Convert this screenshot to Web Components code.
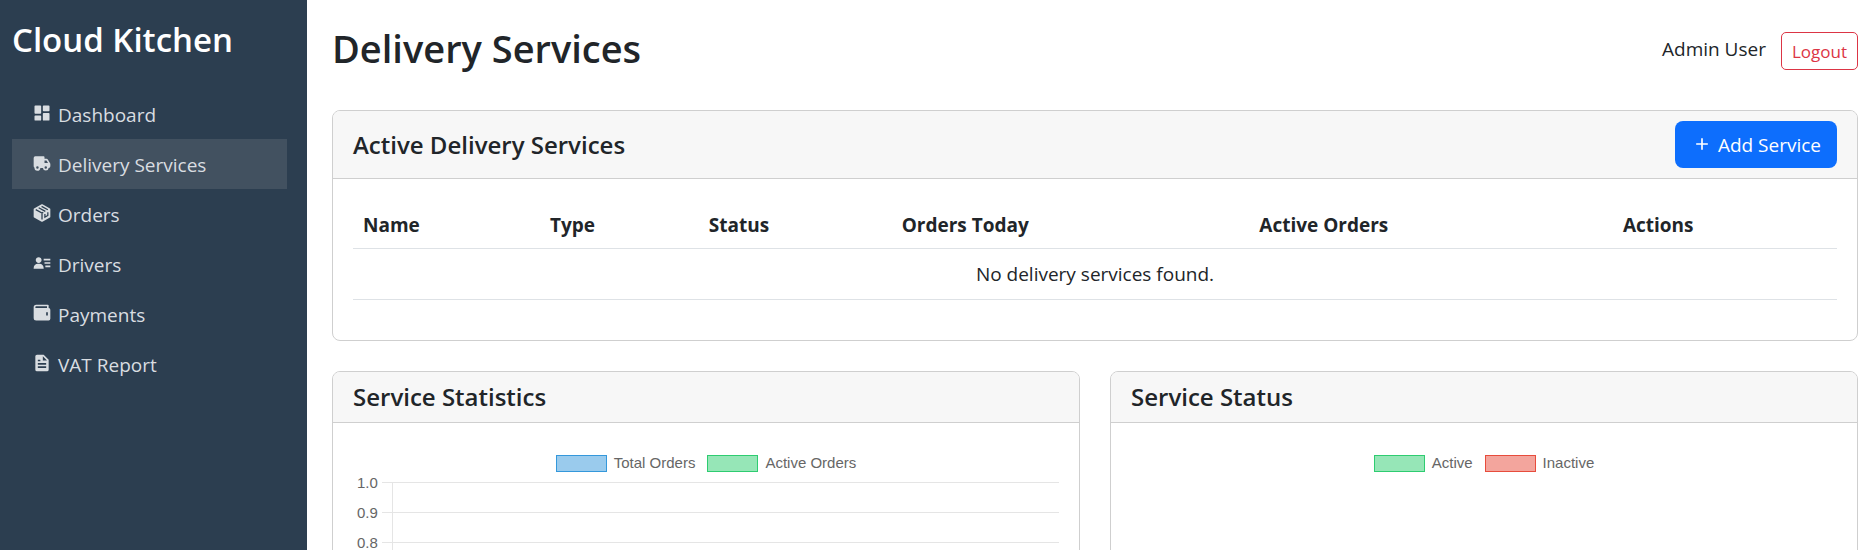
<!DOCTYPE html>
<html lang="en">
<head>
<meta charset="utf-8">
<title>Delivery Services - Cloud Kitchen</title>
<style>
  body { margin: 0; font: 19px/30px "Segoe UI", "Open Sans", "Noto Sans", sans-serif; color: #212529; background: #fff; }
</style>
</head>
<body>
<kitchen-app>
  <side-bar slot="side" heading="Cloud Kitchen">
    <nav-item icon="dashboard">Dashboard</nav-item>
    <nav-item icon="truck" active>Delivery Services</nav-item>
    <nav-item icon="package">Orders</nav-item>
    <nav-item icon="user">Drivers</nav-item>
    <nav-item icon="wallet">Payments</nav-item>
    <nav-item icon="file">VAT Report</nav-item>
  </side-bar>
  <page-header user="Admin User">Delivery Services</page-header>
  <panel-card heading="Active Delivery Services">
    <add-button slot="action">Add Service</add-button>
    <service-table></service-table>
  </panel-card>
  <card-row>
    <panel-card heading="Service Statistics" tall>
      <chart-legend>
        <legend-key tone="blue">Total Orders</legend-key>
        <legend-key tone="green">Active Orders</legend-key>
      </chart-legend>
      <chart-grid ticks="1.0 0.9 0.8"></chart-grid>
    </panel-card>
    <panel-card heading="Service Status" tall>
      <chart-legend>
        <legend-key tone="green">Active</legend-key>
        <legend-key tone="red">Inactive</legend-key>
      </chart-legend>
    </panel-card>
  </card-row>
</kitchen-app>

<script>
const ICONS = {
  dashboard: '<path d="M4 13h6a1 1 0 0 0 1-1V4a1 1 0 0 0-1-1H4a1 1 0 0 0-1 1v8a1 1 0 0 0 1 1zm-1 7a1 1 0 0 0 1 1h6a1 1 0 0 0 1-1v-4a1 1 0 0 0-1-1H4a1 1 0 0 0-1 1v4zm10 0a1 1 0 0 0 1 1h6a1 1 0 0 0 1-1v-7a1 1 0 0 0-1-1h-6a1 1 0 0 0-1 1v7zm1-10h6a1 1 0 0 0 1-1V4a1 1 0 0 0-1-1h-6a1 1 0 0 0-1 1v5a1 1 0 0 0 1 1z"/>',
  truck: '<path fill-rule="evenodd" d="M19.15 8a2 2 0 0 0-1.72-1H15V5a1 1 0 0 0-1-1H4a2 2 0 0 0-2 2v10a2 2 0 0 0 1 1.73 3.49 3.49 0 0 0 7 .27h3.1a3.48 3.48 0 0 0 6.9 0 2 2 0 0 0 2-2v-3a1.07 1.07 0 0 0-.14-.52zM15 9h2.43l1.8 3H15zM6.5 19A1.5 1.5 0 1 1 8 17.5 1.5 1.5 0 0 1 6.5 19zm10 0a1.5 1.5 0 1 1 1.5-1.5 1.5 1.5 0 0 1-1.5 1.5z"/>',
  package: '<path d="M11.5 1.6a1 1 0 0 1 1 0l9 4.9a1 1 0 0 1 .5.9v9.2a1 1 0 0 1-.5.9l-9 4.9a1 1 0 0 1-1 0l-9-4.9a1 1 0 0 1-.5-.9V7.400a1 1 0 0 1 .5-.9z"/><path fill="none" stroke="#2c3e50" stroke-width="1.500" d="M4.500 7.900l7.500 4.100 1.500-.8M12 12v7.800M8 5.700l8 4.400M11.500 4l7.500 4.100M19 11v4l-3.500 1.900v-3.800"/>',
  user: '<path d="M15 11h7v2h-7zm1 4h6v2h-6zm-2-8h8v2h-8zM4 19h10v-1c0-2.757-2.243-5-5-5H7c-2.757 0-5 2.243-5 5v1h2zm4-7c1.995 0 3.5-1.505 3.5-3.5S9.995 5 8 5 4.5 6.505 4.5 8.5 6.005 12 8 12z"/>',
  wallet: '<path fill-rule="evenodd" d="M5 2h14a1 1 0 0 1 1 1v3a2 2 0 0 1 2 2v11a2 2 0 0 1-2 2H5a3 3 0 0 1-3-3V5a3 3 0 0 1 3-3zM5 4a1 1 0 0 0 0 2h13V4zM17 11v4h2v-4z"/>',
  file: '<path fill-rule="evenodd" d="M18 22a2 2 0 0 0 2-2V8l-6-6H6a2 2 0 0 0-2 2v16a2 2 0 0 0 2 2zM13 4l5 5h-5zM7 8h3v2H7zm0 4h10v2H7zm0 4h10v2H7z"/>',
  plus: '<path d="M19 11h-6V5h-2v6H5v2h6v6h2v-6h6z"/>'
};
const svg = name => `<svg viewBox="0 0 24 24" width="20" height="20" fill="currentColor" aria-hidden="true">${ICONS[name]}</svg>`;

function define(name, render) {
  customElements.define(name, class extends HTMLElement {
    connectedCallback() {
      if (!this.shadowRoot) this.attachShadow({ mode: 'open' }).innerHTML = render(this);
    }
  });
}

define('kitchen-app', () => `
  <style>
    :host { display: flex; height: 100vh; overflow: hidden; }
    main { flex: 1; min-width: 0; padding: 24px 15px 0 25px; }
  </style>
  <slot name="side"></slot><main><slot></slot></main>`);

define('side-bar', el => `
  <style>
    :host { display: block; flex: none; width: 307px; box-sizing: border-box; padding: 20px 20px 0 12px; background: #2c3e50; color: #fff; }
    h2 { margin: 0 0 29px; font-size: 33px; line-height: 40px; font-weight: 600; white-space: nowrap; }
    nav { display: flex; flex-direction: column; }
  </style>
  <h2>${el.getAttribute('heading')}</h2><nav><slot></slot></nav>`);

define('nav-item', el => `
  <style>
    :host { display: block; }
    a { display: flex; gap: 6px; padding: 11px 20px 9px; color: #d9dde1; text-decoration: none; }
    :host([active]) a { background: #425160; }
    svg { flex: none; margin-top: 3px; }
  </style>
  <a href="#">${svg(el.getAttribute('icon'))}<span><slot></slot></span></a>`);

define('page-header', el => `
  <style>
    :host { display: flex; justify-content: space-between; align-items: flex-start; margin-bottom: 38px; }
    h1 { margin: 0; font-size: 38px; line-height: 48px; font-weight: 600; }
    div { display: flex; align-items: center; gap: 15px; padding-top: 8px; }
    span { line-height: 34px; padding-bottom: 4px; }
    button { font: inherit; font-size: 17px; line-height: 26px; padding: 6px 10px 4px; background: none; color: #dc3545; border: 1px solid #dc3545; border-radius: 5px; }
  </style>
  <h1><slot></slot></h1>
  <div><span>${el.getAttribute('user')}</span><button type="button">Logout</button></div>`);

define('panel-card', el => `
  <style>
    :host { display: block; margin-bottom: 30px; border: 1px solid #cfcfcf; border-radius: 8px; overflow: hidden; }
    :host([tall]) { min-height: 440px; margin: 0; }
    header { display: flex; justify-content: space-between; align-items: center; padding: 10px 20px; background: #f7f7f7; border-bottom: 1px solid #cfcfcf; }
    h5 { margin: 0; font-size: 24px; line-height: 30px; font-weight: 600; }
    section { padding: 20px; }
  </style>
  <header><h5>${el.getAttribute('heading')}</h5><slot name="action"></slot></header>
  <section><slot></slot></section>`);

define('add-button', () => `
  <style>
    :host { display: block; }
    button { display: flex; gap: 6px; font: inherit; line-height: 30px; color: #fff; background: #0d6efd; border: 0; border-radius: 8px; padding: 9px 16px 8px 17px; white-space: nowrap; }
    svg { margin-top: 4px; }
  </style>
  <button type="button">${svg('plus')}<span><slot></slot></span></button>`);

define('service-table', () => `
  <style>
    :host { display: block; margin-bottom: 20px; }
    table { width: 100%; border-collapse: separate; border-spacing: 0; table-layout: fixed; }
    th, td { padding: 10px; line-height: 30px; border-bottom: 1px solid #dee2e6; text-align: left; }
    th { font-weight: 700; padding: 11px 10px 8px; }
    td { text-align: center; }
  </style>
  <table>
    <colgroup><col style="width:12.6%"><col style="width:10.7%"><col style="width:13%"><col style="width:24.1%"><col style="width:24.5%"><col></colgroup>
    <thead><tr><th>Name</th><th>Type</th><th>Status</th><th>Orders Today</th><th>Active Orders</th><th>Actions</th></tr></thead>
    <tbody><tr><td colspan="6">No delivery services found.</td></tr></tbody>
  </table>`);

define('card-row', () => `
  <style>:host { display: grid; grid-template-columns: 1fr 1fr; gap: 30px; }</style><slot></slot>`);

define('chart-legend', () => `
  <style>:host { display: flex; justify-content: center; gap: 12px; padding-top: 10px; font: 15px/20px "Liberation Sans", Arial, sans-serif; color: #666; }</style><slot></slot>`);

define('legend-key', () => `
  <style>
    :host { display: flex; align-items: center; gap: 7px; }
    i { width: 49px; height: 15px; border: 1px solid; }
    :host([tone=blue]) i { background: #9acbed; border-color: #3498db; }
    :host([tone=green]) i { background: #96e6b7; border-color: #2ecc71; }
    :host([tone=red]) i { background: #f3a59d; border-color: #e74c3c; }
  </style>
  <i></i><span><slot></slot></span>`);

define('chart-grid', el => `
  <style>
    :host { display: block; margin-top: -5px; font: 15px/30px "Liberation Sans", Arial, sans-serif; color: #666; }
    div { display: grid; grid-template-columns: 29px 10px 1fr; height: 30px; }
    span { padding-left: 4px; }
    i { margin-top: 14px; border-top: 1px solid #e5e5e5; }
    b { border-left: 1px solid #e5e5e5; background: linear-gradient(#e5e5e5, #e5e5e5) 0 14px / 100% 1px no-repeat; }
    div:first-of-type b { margin-top: 14px; background-position: 0 0; }
  </style>
  ${el.getAttribute('ticks').split(' ').map(t => `<div><span>${t}</span><i></i><b></b></div>`).join('')}`);
</script>
</body>
</html>
